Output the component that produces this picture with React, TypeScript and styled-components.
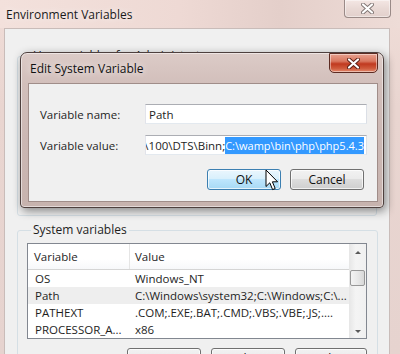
import React from 'react';
import styled, { createGlobalStyle } from 'styled-components';

const GlobalStyle = createGlobalStyle`
  html, body {
    margin: 0;
    padding: 0;
    background: #ead8d3;
  }
  * {
    box-sizing: border-box;
  }
`;

const font = `'Open Sans', 'Noto Sans', sans-serif`;

const Window = styled.div`
  position: relative;
  width: 400px;
  height: 354px;
  overflow: hidden;
  font-family: ${font};
  font-size: 11px;
  color: #1e1e1e;
  background: linear-gradient(180deg, #f0ddd8 0%, #e9d5d0 30%, #e6d3cf 100%);
  display: flex;
  flex-direction: column;
`;

const TitleBar = styled.div`
  height: 28px;
  flex: none;
  display: flex;
  align-items: flex-start;
  justify-content: space-between;
  padding: 0 9px 0 6px;
  background: linear-gradient(90deg, #f3e1dc 0%, #eed9d4 45%, #e4cfca 70%, #eedcd7 100%);
`;

const TitleText = styled.div`
  margin-top: 6px;
  font-size: 12px;
  color: #1a1a1a;
  text-shadow: 0 0 6px rgba(255, 255, 255, 0.9);
`;

const CloseButton = styled.div<{ $red?: boolean }>`
  width: ${p => (p.$red ? 49 : 47)}px;
  height: ${p => (p.$red ? 20 : 18)}px;
  border: 1px solid ${p => (p.$red ? '#5c2b22' : '#9a8a87')};
  border-top: ${p => (p.$red ? '1px solid #5c2b22' : 'none')};
  border-radius: ${p => (p.$red ? '0 0 5px 5px' : '0 0 4px 4px')};
  background: ${p =>
    p.$red
      ? 'linear-gradient(180deg, #e8a18f 0%, #d9775f 40%, #c0391f 55%, #cf5a3c 80%, #e38a6e 100%)'
      : 'linear-gradient(180deg, #f4e7e4 0%, #e9d9d5 50%, #e2d0cc 100%)'};
  box-shadow: inset 0 0 0 1px rgba(255, 255, 255, 0.45);
  display: flex;
  align-items: center;
  justify-content: center;
`;

const Client = styled.div`
  flex: 1;
  margin: 0 10px 0 4px;
  background: #f0f0f0;
  border: 1px solid #c9bcb9;
  border-bottom: none;
  display: flex;
  flex-direction: column;
  padding: 19px 12px 0 12px;
`;

const Group = styled.fieldset<{ $height: number; $gap?: number }>`
  margin: ${p => p.$gap ?? 0}px 0 0 0;
  padding: 0 10px 0 9px;
  height: ${p => p.$height}px;
  border: 1px solid #d5dfe5;
  border-radius: 3px;
  flex: none;
`;

const GroupLabel = styled.legend`
  font-size: 12px;
  line-height: 16px;
  padding: 0 2px;
  margin-left: 4px;
  color: #1e1e1e;
`;

const ListBox = styled.div`
  margin-top: 5px;
  width: 340px;
  height: 96px;
  background: #ffffff;
  border: 1px solid #828790;
  display: flex;
`;

const ListBody = styled.div`
  flex: 1;
  display: flex;
  flex-direction: column;
  overflow: hidden;
`;

const ListRow = styled.div<{ $header?: boolean; $alt?: boolean }>`
  display: grid;
  grid-template-columns: 102px 1fr;
  height: ${p => (p.$header ? 26 : 17)}px;
  flex: none;
  align-items: center;
  background: ${p =>
    p.$header
      ? 'linear-gradient(180deg, #ffffff 0%, #ffffff 60%, #f7f8fa 100%)'
      : p.$alt
      ? '#eeeeee'
      : '#ffffff'};
  border-bottom: ${p => (p.$header ? '1px solid #d5d5d5' : 'none')};
  font-size: 11.5px;
`;

const Cell = styled.div<{ $header?: boolean }>`
  padding-left: ${p => (p.$header ? 6 : 7)}px;
  white-space: nowrap;
  overflow: hidden;
  height: 100%;
  display: flex;
  align-items: center;
  border-right: ${p => (p.$header ? '1px solid #e5e5e5' : 'none')};
  &:last-child {
    border-right: none;
    padding-left: 5px;
  }
`;

const ScrollBar = styled.div`
  width: 17px;
  flex: none;
  background: linear-gradient(90deg, #e6e6e6 0%, #f4f4f4 40%, #f0f0f0 100%);
  display: flex;
  flex-direction: column;
  align-items: center;
  justify-content: space-between;
  padding: 7px 0 5px 0;
  position: relative;
`;

const Arrow = styled.div<{ $down?: boolean }>`
  width: 0;
  height: 0;
  border-left: 3px solid transparent;
  border-right: 3px solid transparent;
  ${p => (p.$down ? 'border-top: 3px solid #5a5a5a;' : 'border-bottom: 3px solid #5a5a5a;')}
`;

const Thumb = styled.div`
  position: absolute;
  left: 1px;
  top: 26px;
  width: 15px;
  height: 16px;
  border: 1px solid #979797;
  border-radius: 2px;
  background: linear-gradient(90deg, #f3f3f3 0%, #e8e8e8 50%, #d8d8d8 100%);
`;

const BottomButtons = styled.div`
  display: flex;
  gap: 10px;
  justify-content: flex-end;
  margin-top: 9px;
  width: 340px;
`;

const Button = styled.div<{ $focus?: boolean; $w?: number }>`
  width: ${p => p.$w ?? 74}px;
  height: 21px;
  flex: none;
  border-radius: 3px;
  border: 1px solid ${p => (p.$focus ? '#3c7fb1' : '#707070')};
  background: ${p =>
    p.$focus
      ? 'linear-gradient(180deg, #eaf6fd 0%, #d9f0fc 45%, #bee6fd 50%, #a7d9f5 100%)'
      : 'linear-gradient(180deg, #f2f2f2 0%, #ebebeb 45%, #dddddd 50%, #cfcfcf 100%)'};
  box-shadow: inset 0 0 0 1px rgba(255, 255, 255, 0.7);
  display: flex;
  align-items: center;
  justify-content: center;
  font-size: 12px;
  color: #111;
`;

const Dialog = styled.div`
  position: absolute;
  left: 20px;
  top: 52px;
  width: 364px;
  height: 156px;
  border: 1px solid #4e403e;
  border-radius: 7px 7px 4px 4px;
  background: linear-gradient(180deg, #dccbc7 0%, #d2bfbb 20%, #cbb7b3 60%, #c7b3ae 100%);
  box-shadow: 0 0 0 1px rgba(255, 255, 255, 0.5) inset, 2px 3px 10px rgba(0, 0, 0, 0.45);
  display: flex;
  flex-direction: column;
  padding: 0 5px 5px 7px;
`;

const DialogHeader = styled.div`
  height: 30px;
  flex: none;
  display: flex;
  justify-content: space-between;
  align-items: flex-start;
  padding-left: 2px;
`;

const DialogTitle = styled.div`
  margin-top: 7px;
  font-size: 12px;
  color: #111;
  text-shadow: 0 0 7px rgba(255, 255, 255, 0.95);
`;

const DialogClient = styled.div`
  flex: 1;
  background: #f0f0f0;
  border: 1px solid #a08d89;
  padding: 20px 11px 0 11px;
  display: flex;
  flex-direction: column;
`;

const FieldGrid = styled.div`
  display: grid;
  grid-template-columns: 105px 222px;
  row-gap: 11px;
  align-items: center;
`;

const FieldLabel = styled.div`
  font-size: 11.5px;
  color: #1e1e1e;
`;

const Input = styled.div`
  height: 20px;
  background: #ffffff;
  border: 1px solid #abadb3;
  border-left-color: #e2e3ea;
  border-right-color: #dbdfe6;
  border-bottom-color: #e3e9ef;
  font-size: 11.5px;
  display: flex;
  align-items: center;
  padding: 0 3px;
  white-space: nowrap;
  overflow: hidden;
`;

const ValueInput = styled(Input)`
  justify-content: flex-end;
  padding: 0 2px 0 0;
`;

const Selected = styled.span`
  background: #3399ff;
  color: #ffffff;
  padding: 1px 0;
  font-size: 11px;
`;

const DialogButtons = styled.div`
  display: flex;
  justify-content: flex-end;
  gap: 9px;
  margin-top: 14px;
  padding-right: 2px;
`;

const Pointer = styled.svg`
  position: absolute;
  left: 265px;
  top: 169px;
`;

const CloseGlyph: React.FC<{ red?: boolean }> = ({ red }) => (
  <svg width="13" height="11" viewBox="0 0 13 11">
    <path
      d="M2 1.5 L11 9.5 M11 1.5 L2 9.5"
      stroke={red ? '#5a1e14' : '#7f7472'}
      strokeWidth="4"
      strokeLinecap="round"
    />
    <path d="M2 1.5 L11 9.5 M11 1.5 L2 9.5" stroke="#ffffff" strokeWidth="2.2" strokeLinecap="round" />
  </svg>
);

const rows = [
  { name: 'OS', value: 'Windows_NT' },
  { name: 'Path', value: 'C:\\Windows\\system32;C:\\Windows;C:\\...' },
  { name: 'PATHEXT', value: '.COM;.EXE;.BAT;.CMD;.VBS;.VBE;.JS;....' },
  { name: 'PROCESSOR_A...', value: 'x86' },
];

export default function App() {
  return (
    <>
      <GlobalStyle />
      <Window>
        <TitleBar>
          <TitleText>Environment Variables</TitleText>
          <CloseButton>
            <CloseGlyph />
          </CloseButton>
        </TitleBar>
        <Client>
          <Group $height={168}>
            <GroupLabel>User variables for Administrator</GroupLabel>
          </Group>
          <Group $height={200} $gap={6}>
            <GroupLabel>System variables</GroupLabel>
            <ListBox>
              <ListBody>
                <ListRow $header>
                  <Cell $header>Variable</Cell>
                  <Cell $header>Value</Cell>
                </ListRow>
                {rows.map((r, i) => (
                  <ListRow key={r.name} $alt={i === 1}>
                    <Cell>{r.name}</Cell>
                    <Cell>{r.value}</Cell>
                  </ListRow>
                ))}
              </ListBody>
              <ScrollBar>
                <Arrow />
                <Thumb />
                <Arrow $down />
              </ScrollBar>
            </ListBox>
            <BottomButtons>
              <Button $w={74}>New...</Button>
              <Button $w={74}>Edit...</Button>
              <Button $w={72}>Delete</Button>
            </BottomButtons>
          </Group>
        </Client>

        <Dialog>
          <DialogHeader>
            <DialogTitle>Edit System Variable</DialogTitle>
            <CloseButton $red>
              <CloseGlyph red />
            </CloseButton>
          </DialogHeader>
          <DialogClient>
            <FieldGrid>
              <FieldLabel>Variable name:</FieldLabel>
              <Input>Path</Input>
              <FieldLabel>Variable value:</FieldLabel>
              <ValueInput>
                <span>0\100\DTS\Binn;</span>
                <Selected>C:\wamp\bin\php\php5.4.3</Selected>
              </ValueInput>
            </FieldGrid>
            <DialogButtons>
              <Button $focus>OK</Button>
              <Button>Cancel</Button>
            </DialogButtons>
          </DialogClient>
        </Dialog>

        <Pointer width="14" height="23" viewBox="0 0 14 23">
          <path
            d="M1 1 L1 17.5 L4.8 13.8 L7.6 20.6 L10.2 19.5 L7.4 12.8 L12.6 12.8 Z"
            fill="#ffffff"
            stroke="#000000"
            strokeWidth="1"
            strokeLinejoin="round"
          />
        </Pointer>
      </Window>
    </>
  );
}
